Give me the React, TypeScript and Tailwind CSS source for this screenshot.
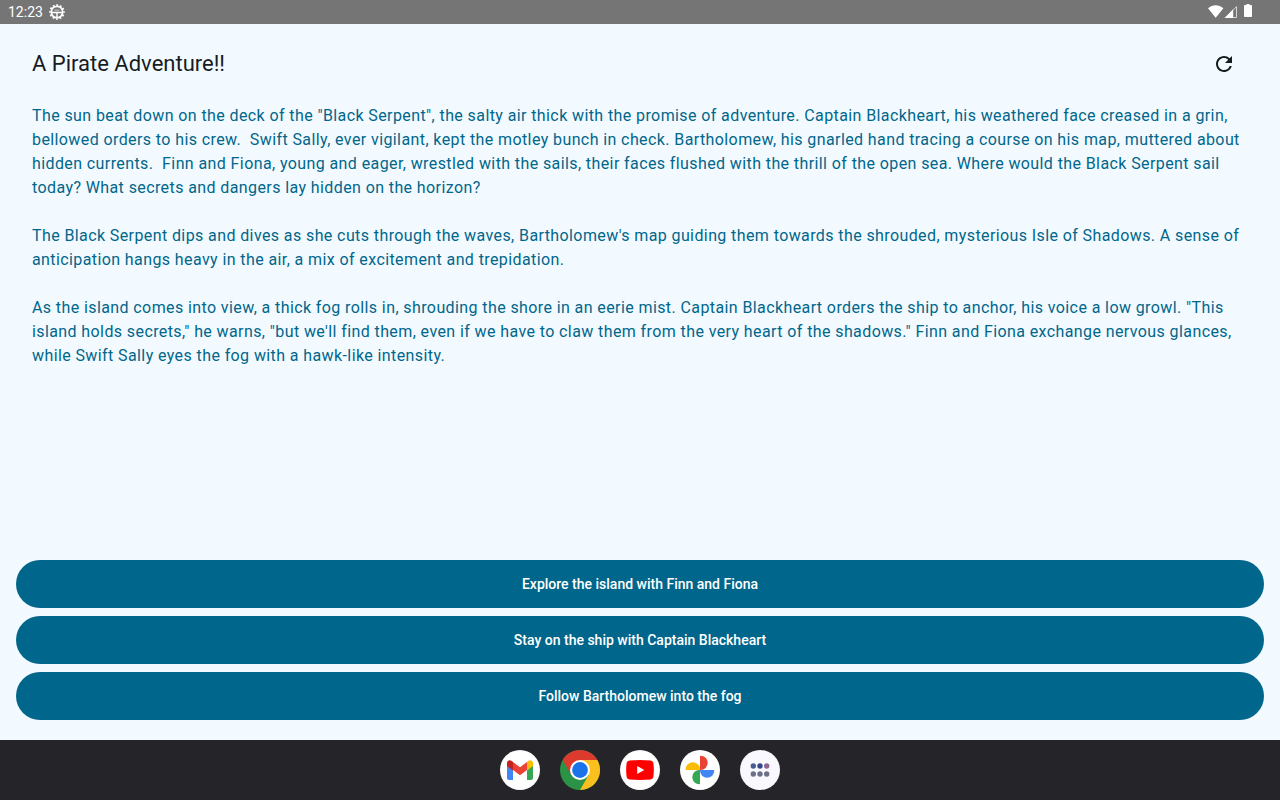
import { MdRefresh } from "react-icons/md";

const story = [
  'The sun beat down on the deck of the "Black Serpent", the salty air thick with the promise of adventure. Captain Blackheart, his weathered face creased in a grin, bellowed orders to his crew.  Swift Sally, ever vigilant, kept the motley bunch in check. Bartholomew, his gnarled hand tracing a course on his map, muttered about hidden currents.  Finn and Fiona, young and eager, wrestled with the sails, their faces flushed with the thrill of the open sea. Where would the Black Serpent sail today? What secrets and dangers lay hidden on the horizon?',
  "The Black Serpent dips and dives as she cuts through the waves, Bartholomew's map guiding them towards the shrouded, mysterious Isle of Shadows. A sense of anticipation hangs heavy in the air, a mix of excitement and trepidation.",
  'As the island comes into view, a thick fog rolls in, shrouding the shore in an eerie mist. Captain Blackheart orders the ship to anchor, his voice a low growl. "This island holds secrets," he warns, "but we\'ll find them, even if we have to claw them from the very heart of the shadows." Finn and Fiona exchange nervous glances, while Swift Sally eyes the fog with a hawk-like intensity.',
];

const choices = [
  "Explore the island with Finn and Fiona",
  "Stay on the ship with Captain Blackheart",
  "Follow Bartholomew into the fog",
];

function GearIcon() {
  return (
    <svg viewBox="0 0 16 16" className="size-4" fill="none" stroke="white" aria-hidden="true">
      <circle cx="8" cy="8" r="5.7" strokeWidth="1.7" />
      <circle cx="8" cy="8" r="7" strokeWidth="1.6" strokeDasharray="1.9 1.765" strokeDashoffset=".95" />
      <path d="M2.500 8.500h11" strokeWidth="1.6" />
      <path d="M8 8.500v5" strokeWidth="1.4" />
      <path d="M5.500 6.200h5" strokeWidth="1" strokeOpacity=".6" />
    </svg>
  );
}

function StatusBar() {
  return (
    <header className="flex h-6 shrink-0 items-center justify-between bg-[#757575] pl-2 pr-[27px] text-white">
      <div className="flex items-center gap-1.5">
        <span className="text-sm leading-6">12:23</span>
        <GearIcon />
      </div>
      <svg viewBox="0 0 45 16" className="h-4 w-[45px]" fill="white" role="img" aria-label="Wi-Fi, signal and battery">
        <path d="M0 4.200C4.600.2 10.800.2 15.400 4.200L7.700 13.700Z" />
        <path d="M25.200 5.300V14H16.500Z" />
        <path d="M28.500 2.700V13.500H17.700Z" fill="none" stroke="white" strokeOpacity=".7" />
        <path d="M36.800 1h1.700V0h3v1h1.700q.8 0 .8.8v10.400q0 .8-.8.8h-6.400q-.8 0-.8-.8V1.800q0-.8.8-.8Z" />
      </svg>
    </header>
  );
}

function GmailIcon() {
  return (
    <svg viewBox="0 0 40 40" className="size-10" aria-hidden="true">
      <circle cx="20" cy="20" r="20" fill="white" />
      <path d="M7 14l6 4.500V30H9a2 2 0 0 1-2-2Z" fill="#4285f4" />
      <path d="M27 18.500l6-4.500v14a2 2 0 0 1-2 2h-4Z" fill="#34a853" />
      <path d="M27 12l1.200-.9C30.200 9.100 33 10.400 33 13v3l-6 4.500Z" fill="#fbbc04" />
      <path d="M13 12l7 5.300 7-5.300v8l-7 5.300-7-5.300Z" fill="#ea4335" />
      <path d="M7 13c0-2.600 2.800-3.900 4.800-1.900L13 12v8.500L7 16Z" fill="#c5221f" />
    </svg>
  );
}

function ChromeIcon() {
  return (
    <svg viewBox="0 0 40 40" className="size-10" aria-hidden="true">
      <circle cx="20" cy="20" r="20" fill="#2b9346" />
      <path d="M2.680 10A20 20 0 0 1 37.320 10H20L11.340 25Z" fill="#db3a2d" />
      <path d="M37.320 10A20 20 0 0 1 20 40L28.660 25 20 10Z" fill="#fcc01e" />
      <circle cx="20" cy="20" r="10" fill="white" />
      <circle cx="20" cy="20" r="7.900" fill="#1a73e8" />
    </svg>
  );
}

function YouTubeIcon() {
  return (
    <svg viewBox="0 0 40 40" className="size-10" aria-hidden="true">
      <circle cx="20" cy="20" r="20" fill="white" />
      <path d="M9.500 10.500Q20 9.600 30.500 10.500Q33 10.800 33.400 13.300Q34.300 20 33.400 26.700Q33 29.200 30.500 29.500Q20 30.400 9.500 29.500Q7 29.200 6.600 26.700Q5.700 20 6.600 13.300Q7 10.800 9.500 10.500Z" fill="#ff0000" />
      <path d="M17.200 16v8l7.100-4Z" fill="white" />
    </svg>
  );
}

function PhotosIcon() {
  return (
    <svg viewBox="0 0 40 40" className="size-10" aria-hidden="true">
      <circle cx="20" cy="20" r="20" fill="white" />
      <path d="M20.600 5.700a7.150 7.150 0 0 1 0 14.300H20V6.300q0-.6.600-.6Z" fill="#ea4335" />
      <path d="M34.300 20.600a7.150 7.150 0 0 1-14.300 0V20h13.700q.6 0 .6.600Z" fill="#4285f4" />
      <path d="M19.400 34.300a7.150 7.150 0 0 1 0-14.300H20v13.700q0 .6-.6.600Z" fill="#34a853" />
      <path d="M5.700 19.400a7.150 7.150 0 0 1 14.300 0V20H6.300q-.6 0-.6-.6Z" fill="#fbbc04" />
    </svg>
  );
}

function AllAppsIcon() {
  return (
    <svg viewBox="0 0 40 40" className="size-10" aria-hidden="true">
      <circle cx="20" cy="20" r="20" fill="#faf8ff" />
      <circle cx="13.300" cy="16" r="2.700" fill="#475d92" />
      <circle cx="20" cy="16" r="2.700" fill="#34498a" />
      <circle cx="26.700" cy="16" r="2.700" fill="#8b6890" />
      <circle cx="13.300" cy="24" r="2.700" fill="#6d7088" />
      <circle cx="20" cy="24" r="2.700" fill="#6d7088" />
      <circle cx="26.700" cy="24" r="2.700" fill="#6d7088" />
    </svg>
  );
}

const apps = [
  { name: "Gmail", Icon: GmailIcon },
  { name: "Chrome", Icon: ChromeIcon },
  { name: "YouTube", Icon: YouTubeIcon },
  { name: "Photos", Icon: PhotosIcon },
  { name: "All apps", Icon: AllAppsIcon },
];

export default function App() {
  return (
    <div className="flex min-h-screen flex-col bg-[#f3faff] font-['Roboto',sans-serif]">
      <StatusBar />
      <main className="flex grow flex-col px-4 pb-5">
        <div className="flex h-20 items-center justify-between px-4">
          <h1 className="text-[22px] leading-7 text-[#171c1f]">A Pirate Adventure!!</h1>
          <button type="button" aria-label="Restart story" className="grid size-12 place-items-center rounded-full text-[#171c1f]">
            <MdRefresh size={24} />
          </button>
        </div>
        <div className="flex grow flex-col gap-6 px-4 pb-6 text-base leading-6 tracking-wide text-[#00668b]">
          {story.map((paragraph) => (
            <p key={paragraph} className="whitespace-pre-wrap">{paragraph}</p>
          ))}
        </div>
        <div className="flex flex-col gap-2">
          {choices.map((choice) => (
            <button key={choice} type="button" className="h-12 w-full rounded-full bg-[#00668b] text-sm font-medium text-white">
              {choice}
            </button>
          ))}
        </div>
      </main>
      <nav aria-label="Taskbar" className="flex h-[60px] shrink-0 items-center justify-center gap-5 bg-[#252529]">
        {apps.map(({ name, Icon }) => (
          <button key={name} type="button" aria-label={name} className="rounded-full">
            <Icon />
          </button>
        ))}
      </nav>
    </div>
  );
}
